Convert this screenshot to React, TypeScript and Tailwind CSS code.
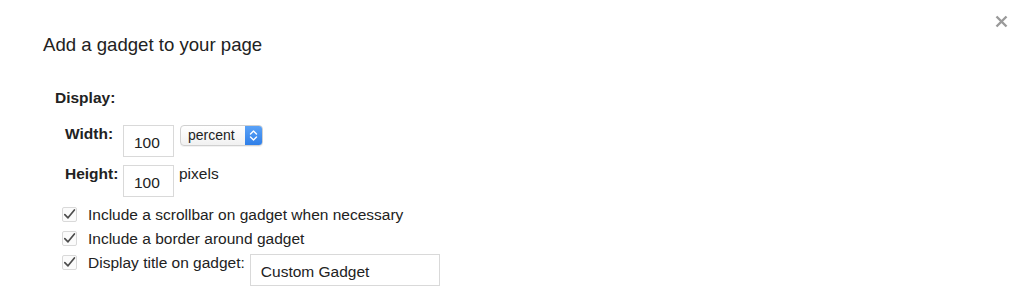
import React from "react";

function CheckIcon() {
  return (
    <span className="mt-[1px] flex h-[15px] w-[15px] shrink-0 items-center justify-center rounded-[2px] border border-[#d9d9d9] bg-[#fbfbfb]">
      <svg width="13" height="13" viewBox="0 0 13 13" fill="none">
        <path
          d="M1.8 6.6 L5 9.8 L11.4 2"
          stroke="#4d4d4d"
          strokeWidth="1.7"
          strokeLinecap="round"
          strokeLinejoin="round"
        />
      </svg>
    </span>
  );
}

function CheckRow({ label, children }: { label: string; children?: React.ReactNode }) {
  return (
    <div className="flex items-start">
      <CheckIcon />
      <span className="ml-[11px] leading-[17px]">{label}</span>
      {children}
    </div>
  );
}

function TextBox({ value, className }: { value: string; className: string }) {
  return (
    <div
      className={`h-[32px] border border-[#d9d9d9] bg-white pt-[8px] leading-[17px] text-[#222] ${className}`}
    >
      {value}
    </div>
  );
}

export default function App() {
  return (
    <div
      className="relative h-[308px] w-[1024px] overflow-hidden bg-white text-[15.5px] text-[#222]"
      style={{ fontFamily: '"Liberation Sans", Arial, sans-serif' }}
    >
      <svg
        className="absolute left-[995px] top-[15px]"
        width="13"
        height="13"
        viewBox="0 0 13 13"
      >
        <path d="M1.5 1.5 L11.5 11.5 M11.5 1.5 L1.5 11.5" stroke="#9a9a9a" strokeWidth="2.4" />
      </svg>

      <div className="pl-[43px] pt-[34px]">
        <h1 className="text-[18.6px] leading-[22px] text-[#222]">Add a gadget to your page</h1>

        <div className="mt-[33px] pl-[12px]">
          <div className="font-bold leading-[17px]">Display:</div>

          <div className="mt-[19px] flex flex-col gap-[8px] pl-[10px]">
            <div className="flex items-start">
              <span className="w-[58px] font-bold leading-[17px]">Width:</span>
              <TextBox value="100" className="w-[51px] pl-[10px]" />
              <div className="ml-[6px] flex h-[21px] w-[83px] overflow-hidden rounded-[4px] border border-[#d0d0d0] bg-gradient-to-b from-white to-[#f1f1f1] shadow-[0_1px_0_rgba(0,0,0,0.05)]">
                <span className="flex-1 pl-[7px] text-[14px] leading-[19px] text-[#222]">percent</span>
                <span className="flex w-[17px] items-center justify-center bg-gradient-to-b from-[#5aa2f7] to-[#2f7fe8]">
                  <svg width="9" height="13" viewBox="0 0 9 13" fill="none">
                    <path
                      d="M1.5 5 L4.5 2 L7.5 5 M1.5 8 L4.5 11 L7.5 8"
                      stroke="white"
                      strokeWidth="1.4"
                      strokeLinecap="round"
                      strokeLinejoin="round"
                    />
                  </svg>
                </span>
              </div>
            </div>

            <div className="flex items-start">
              <span className="w-[58px] font-bold leading-[17px]">Height:</span>
              <TextBox value="100" className="w-[51px] pl-[10px]" />
              <span className="ml-[5px] leading-[17px]">pixels</span>
            </div>
          </div>

          <div className="mt-[9px] flex flex-col gap-[7px] pl-[7px]">
            <CheckRow label="Include a scrollbar on gadget when necessary" />
            <CheckRow label="Include a border around gadget" />
            <CheckRow label="Display title on gadget:">
              <TextBox value="Custom Gadget" className="ml-[5px] w-[190px] pl-[10px]" />
            </CheckRow>
          </div>
        </div>
      </div>
    </div>
  );
}
